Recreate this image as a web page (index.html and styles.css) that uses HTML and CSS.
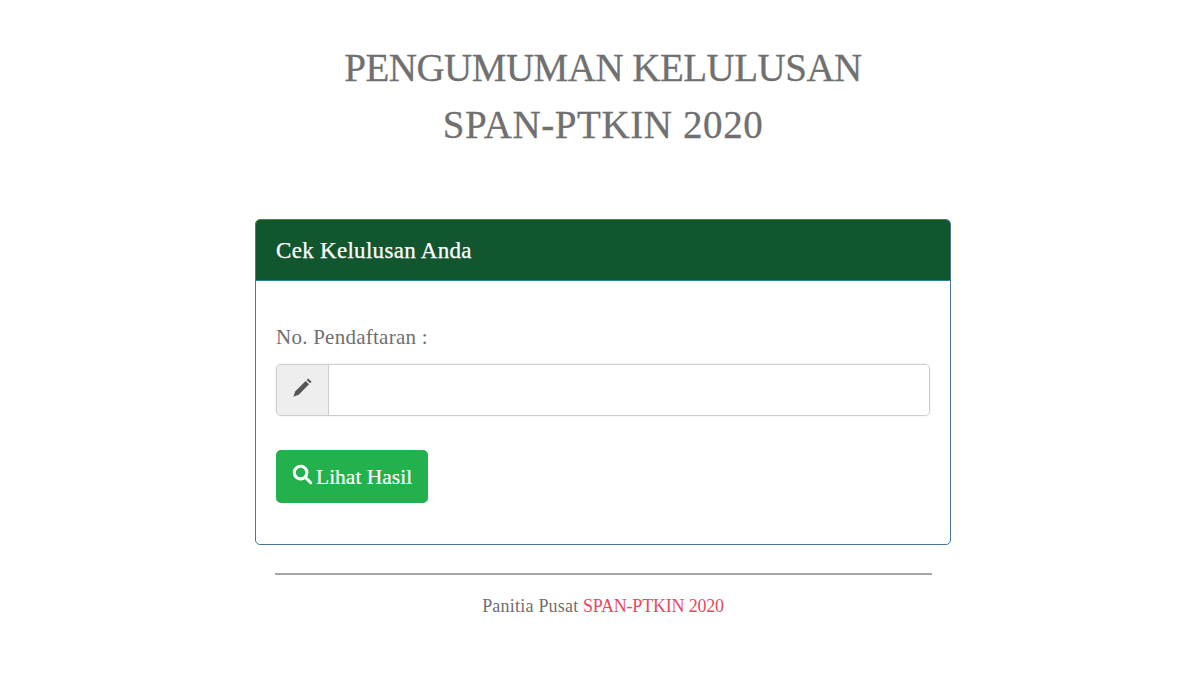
FILE: index.html
```html
<!DOCTYPE html>
<html lang="id">
<head>
    <meta charset="UTF-8">
    <meta name="viewport" content="width=device-width, initial-scale=1.0">
    <title>Pengumuman Kelulusan SPAN-PTKIN 2020</title>
    <link rel="stylesheet" href="styles.css">
</head>
<body>
    <div class="container">
        <h1 class="page-title">
            <span class="title-line title-line-top">PENGUMUMAN KELULUSAN</span>
            <span class="title-line title-line-bottom">SPAN-PTKIN 2020</span>
        </h1>

        <div class="panel">
            <div class="panel-heading">Cek Kelulusan Anda</div>
            <div class="panel-body">
                <label class="field-label" for="noPendaftaran">No. Pendaftaran :</label>
                <div class="input-group">
                    <span class="input-addon">
                        <svg class="icon-pencil" viewBox="0 0 20 20" aria-hidden="true">
                            <path d="M15.4 1.400 18.600 4.600 17.200 6 14 2.800Z"/>
                            <path d="M13 3.800 16.200 7 6.400 16.800 1.200 18.800 3.200 13.600Z"/>
                        </svg>
                    </span>
                    <input class="input-field" type="text" id="noPendaftaran">
                </div>
                <button class="btn-result" type="button">
                    <svg class="icon-search" viewBox="0 0 22 22" aria-hidden="true">
                        <circle cx="9" cy="9" r="6.6"/>
                        <path d="M13.9 13.9 19.6 19.6"/>
                    </svg>
                    Lihat Hasil
                </button>
            </div>
        </div>

        <hr class="divider">
        <p class="footer-text"><span class="footer-lead">Panitia Pusat</span> <span class="footer-accent">SPAN-PTKIN 2020</span></p>
    </div>
</body>
</html>
```

FILE: styles.css
```css
:root {
    --text-gray: #6f6f6f;
    --panel-green: #12562f;
    --panel-border: #4a7396;
    --btn-green: #22b14c;
    --accent-red: #e8485f;
}

body {
    margin: 0;
    background-color: #fff;
    color: var(--text-gray);
    font-family: "Liberation Serif", "DejaVu Serif", serif;
}

.container {
    width: 696px;
    margin: 0 auto;
    padding-left: 6px;
}

.page-title {
    margin: 0;
    padding-top: 39px;
    height: 180px;
    font-size: 39px;
    font-weight: normal;
    line-height: 57px;
    text-align: center;
    color: #707070;
    white-space: nowrap;
    -webkit-text-stroke: 0.3px #707070;
}

.title-line {
    display: block;
}

.title-line-top {
    letter-spacing: -0.5px;
}

.title-line-bottom {
    letter-spacing: 0.6px;
}

.panel {
    border: 1px solid var(--panel-border);
    border-radius: 5px;
    overflow: hidden;
}

.panel-heading {
    height: 60px;
    padding: 0 20px;
    background-color: var(--panel-green);
    border-bottom: 1px solid #2f7f9f;
    color: #fff;
    font-size: 23px;
    letter-spacing: 0.3px;
    line-height: 62px;
    -webkit-text-stroke: 0.25px #fff;
}

.panel-body {
    height: 263px;
    padding: 0 20px;
}

.field-label {
    display: block;
    padding-top: 43px;
    font-size: 21px;
    letter-spacing: 0.25px;
    line-height: 26px;
}

.input-group {
    display: flex;
    height: 52px;
    margin-top: 14px;
    border: 1px solid #ccc;
    border-radius: 5px;
    box-sizing: border-box;
    box-shadow: 0 0 1px #bbb;
    overflow: hidden;
}

.input-addon {
    display: flex;
    align-items: center;
    justify-content: center;
    width: 51px;
    background-color: #eee;
    border-right: 1px solid #ccc;
}

.icon-pencil {
    width: 21px;
    height: 21px;
    margin-top: -5px;
    fill: #555;
}

.input-field {
    flex: 1;
    border: none;
    outline: none;
    background: #fff;
}

.btn-result {
    display: flex;
    align-items: center;
    gap: 3px;
    height: 53px;
    margin-top: 34px;
    padding: 2px 16px 0;
    border: none;
    border-radius: 5px;
    background-color: var(--btn-green);
    color: #fff;
    font-family: inherit;
    font-size: 21.5px;
    -webkit-text-stroke: 0.2px #fff;
}

.icon-search {
    width: 21px;
    height: 21px;
    margin-top: -6px;
    fill: none;
    stroke: #fff;
    stroke-width: 3.2;
    stroke-linecap: round;
}

.divider {
    width: 657px;
    height: 2px;
    margin: 28px 0 0 20px;
    border: none;
    background-color: #a6a6a6;
}

.footer-text {
    margin: 20px 0 0;
    font-size: 18px;
    line-height: 22px;
    text-align: center;
}

.footer-lead {
    letter-spacing: 0.22px;
}

.footer-accent {
    color: var(--accent-red);
    letter-spacing: -0.2px;
}
```
